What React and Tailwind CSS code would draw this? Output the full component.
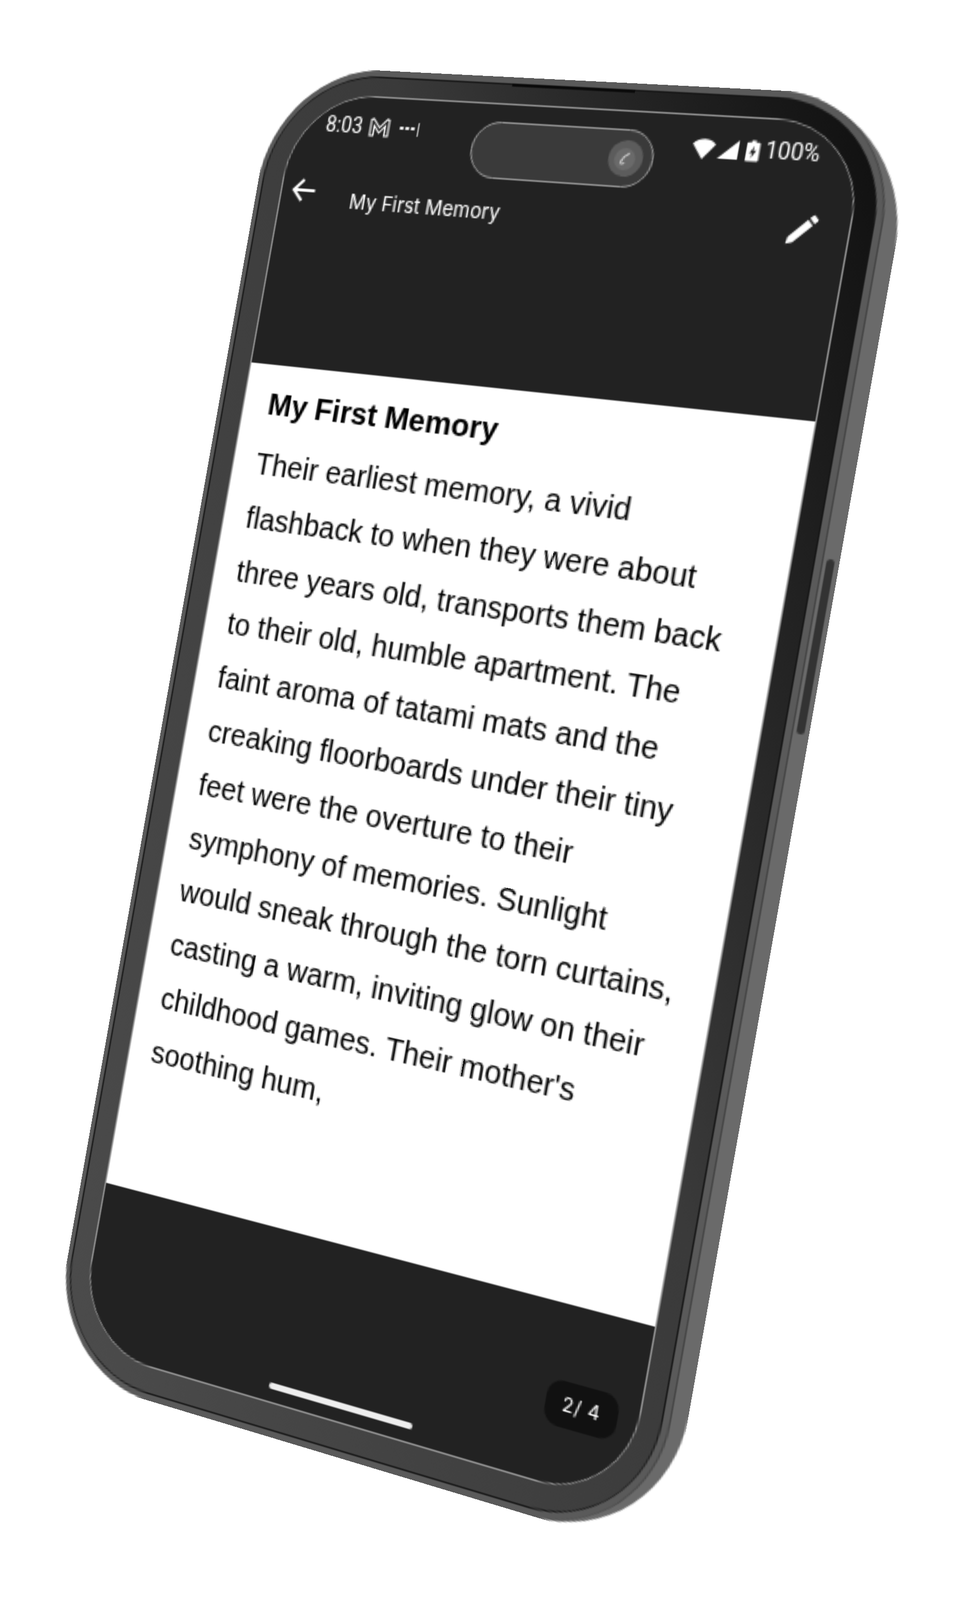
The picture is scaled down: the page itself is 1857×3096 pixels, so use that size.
// phone mockup: the screen is laid out flat, then the whole phone gets one perspective matrix
const textLines = [
  'Their earliest memory, a vivid',
  'flashback to when they were about',
  'three years old, transports them back',
  'to their old, humble apartment. The',
  'faint aroma of tatami mats and the',
  'creaking floorboards under their tiny',
  'feet were the overture to their',
  'symphony of memories. Sunlight',
  'would sneak through the torn curtains,',
  'casting a warm, inviting glow on their',
  "childhood games. Their mother's",
  'soothing hum,',
];

// corners of the white page area in the photo, and the same rect in phone coordinates
const quad = [[484, 701], [1580, 816], [1270, 2568], [203, 2288]];
const rect = { x: 18, y: 199, w: 390, h: 552 };

function perspectiveMatrix() {
  const [[x0, y0], [x1, y1], [x2, y2], [x3, y3]] = quad;
  const dx1 = x1 - x2, dx2 = x3 - x2, sx = x0 - x1 + x2 - x3;
  const dy1 = y1 - y2, dy2 = y3 - y2, sy = y0 - y1 + y2 - y3;
  const den = dx1 * dy2 - dx2 * dy1;
  const g = (sx * dy2 - dx2 * sy) / den;
  const h = (dx1 * sy - sx * dy1) / den;
  const a = x1 - x0 + g * x1, b = x3 - x0 + h * x3;
  const d = y1 - y0 + g * y1, e = y3 - y0 + h * y3;
  const { x, y, w, h: rh } = rect;
  const m = [
    a / w, d / w, 0, g / w,
    b / rh, e / rh, 0, h / rh,
    0, 0, 1, 0,
    x0 - (a * x) / w - (b * y) / rh, y0 - (d * x) / w - (e * y) / rh, 0, 1 - (g * x) / w - (h * y) / rh,
  ];
  return `matrix3d(${m.join(',')})`;
}

function StatusLeft() {
  return (
    <div className="flex items-center self-start pl-[24px] pt-[10px] text-white">
      <span className="text-[14px] leading-[18px] font-['Roboto',sans-serif]">8:03</span>
      <svg width="15" height="13" viewBox="0 0 15 13" className="ml-[5px]" fill="none" stroke="white" strokeWidth="1.1">
        <path d="M1 12V1.5L2.5 1L7.5 6.5L12.5 1L14 1.5V12H11.5V5.5L7.5 10L3.5 5.5V12Z" />
      </svg>
      <div className="ml-[7px] flex items-center gap-[1.5px]">
        <span className="size-[2.5px] rounded-full bg-white" />
        <span className="size-[2.5px] rounded-full bg-white" />
        <span className="size-[2.5px] rounded-full bg-white" />
        <span className="ml-[1px] h-[9px] w-[0.7px] bg-white/70" />
      </div>
    </div>
  );
}

function StatusRight() {
  return (
    <div className="flex items-center justify-end self-start pr-[26px] pt-[11px] text-white">
      <svg width="15" height="13" viewBox="0 0 15 12" fill="white" preserveAspectRatio="none">
        <path d="M0 3.2C4 -0.8 11 -0.8 15 3.2L7.2 12Z" />
      </svg>
      <svg width="13" height="12" viewBox="0 0 14 12" fill="white" className="ml-[1.5px]" preserveAspectRatio="none">
        <path d="M14 0V12H0Z" />
      </svg>
      <svg width="8.5" height="14" viewBox="0 0 9 14" className="ml-[5.5px]">
        <path d="M3 0H6V1.5H8.2Q9 1.5 9 2.3V13.2Q9 14 8.2 14H.8Q0 14 0 13.2V2.3Q0 1.5 .8 1.5H3Z" fill="white" />
        <path d="M5.4 3.5L2.3 8.5H4.2L3.6 12L6.8 6.8H4.8Z" fill="#222222" />
      </svg>
      <span className="ml-[3px] text-[14.5px] leading-[18px] font-['Roboto',sans-serif]">100%</span>
    </div>
  );
}

function CameraPill() {
  return (
    <div className="mt-[11px] -translate-x-[1px] flex h-[37px] items-center justify-end rounded-full border border-[#9a9a9a] bg-[#3a3a3a] pr-[6px]">
      <div className="flex size-[23px] items-center justify-center rounded-full bg-[#5c5c5c]">
        <div className="flex size-[14px] items-center justify-center rounded-full bg-[#6a6a6a]">
          <svg width="8" height="9" viewBox="0 0 8 9" fill="none" stroke="#c8c8c8" strokeWidth="1.2">
            <path d="M6.5 .8C6 3 3 2.5 3 4.5C3 5.5 1.5 5.5 1.5 7C1.5 8.3 3.5 8.3 4 7.2" />
          </svg>
        </div>
      </div>
    </div>
  );
}

function Header() {
  return (
    <div className="h-[181px] shrink-0 bg-[#222222]">
      <div className="grid grid-cols-[1fr_125px_1fr]">
        <StatusLeft />
        <CameraPill />
        <StatusRight />
      </div>
      <div className="flex items-start pl-[7px] pr-[19px] pt-[7px] text-white">
        <svg width="18" height="16" viewBox="0 0 18 16" fill="none" stroke="white" strokeWidth="2" className="mt-[1px]">
          <path d="M17.5 8H2M8.5 1L1.8 8L8.5 15" />
        </svg>
        <span className="ml-[26px] mt-[4.5px] flex-1 text-[13.5px] leading-[18px] font-['Inter',sans-serif]">My First Memory</span>
        <svg width="20" height="20" viewBox="0 0 24 24" fill="white" className="mt-[1px]">
          <path d="M16.6 3.4L18.9 1.2Q19.6 .6 20.3 1.2L22.8 3.8Q23.4 4.5 22.8 5.2L20.6 7.4Z" />
          <path d="M15.4 4.6L19.4 8.6L6 22L1 23L2 18Z" />
        </svg>
      </div>
    </div>
  );
}

function Page() {
  return (
    <div className="h-[552px] shrink-0 bg-white text-black font-['Liberation_Sans',Arial,sans-serif]">
      <h1 className="pl-[18px] pt-[13px] text-[20.9px] leading-[26px] font-bold">My First Memory</h1>
      <div className="mt-[9px] pl-[16.5px] text-[20.45px] leading-[35.8px] whitespace-nowrap">
        {textLines.map((line) => (
          <p key={line}>{line}</p>
        ))}
      </div>
    </div>
  );
}

function Footer() {
  return (
    <div className="relative flex-1 bg-[#222222]">
      <div className="absolute right-[13px] top-[46px] flex h-[28px] w-[47px] items-center justify-center rounded-[10px] bg-[#111111] text-[12px] tracking-[0.5px] text-white font-['Inter',sans-serif]">
        2/ 4
      </div>
      <div className="absolute bottom-[8px] left-[143px] h-[4px] w-[102px] rounded-full bg-[#eeeeee]" />
    </div>
  );
}

export default function App() {
  return (
    <div className="h-[3096px] w-full overflow-hidden bg-white">
      <div className="w-max origin-top-left" style={{ transform: perspectiveMatrix(), transformOrigin: '0 0' }}>
        {/* side wall, only visible along the right edge */}
        <div className="relative rounded-[80px] rounded-tr-[92px] rounded-br-[84px] bg-[#6a6a6a] pr-[10px]">
          <div className="absolute right-[3px] top-[280px] h-[106px] w-[5px] rounded-full bg-[#333333]" />
          {/* metal rim */}
          <div className="rounded-[78px] border-r border-[#444444] bg-[#5a5a5a] pb-[4px] pl-[3px] pr-[4px] pt-[4px]">
            <div className="rounded-[74px] bg-[#161616] p-[1px]">
              {/* bezel */}
              <div className="relative rounded-[72px] bg-linear-to-tr from-[#4c4c4c] via-[#3a3a3a] via-60% to-[#0f0f0f] pb-[16px] pl-[14px] pr-[13px] pt-[12px]">
                <div className="absolute left-1/2 top-[-1px] h-[2px] w-[84px] -translate-x-1/2 bg-[#0a0a0a]" />
                <div className="flex h-[844px] w-[390px] flex-col overflow-hidden rounded-[58px] border border-[#9a9a9a] bg-[#222222]">
                  <Header />
                  <Page />
                  <Footer />
                </div>
              </div>
            </div>
          </div>
        </div>
      </div>
    </div>
  );
}
